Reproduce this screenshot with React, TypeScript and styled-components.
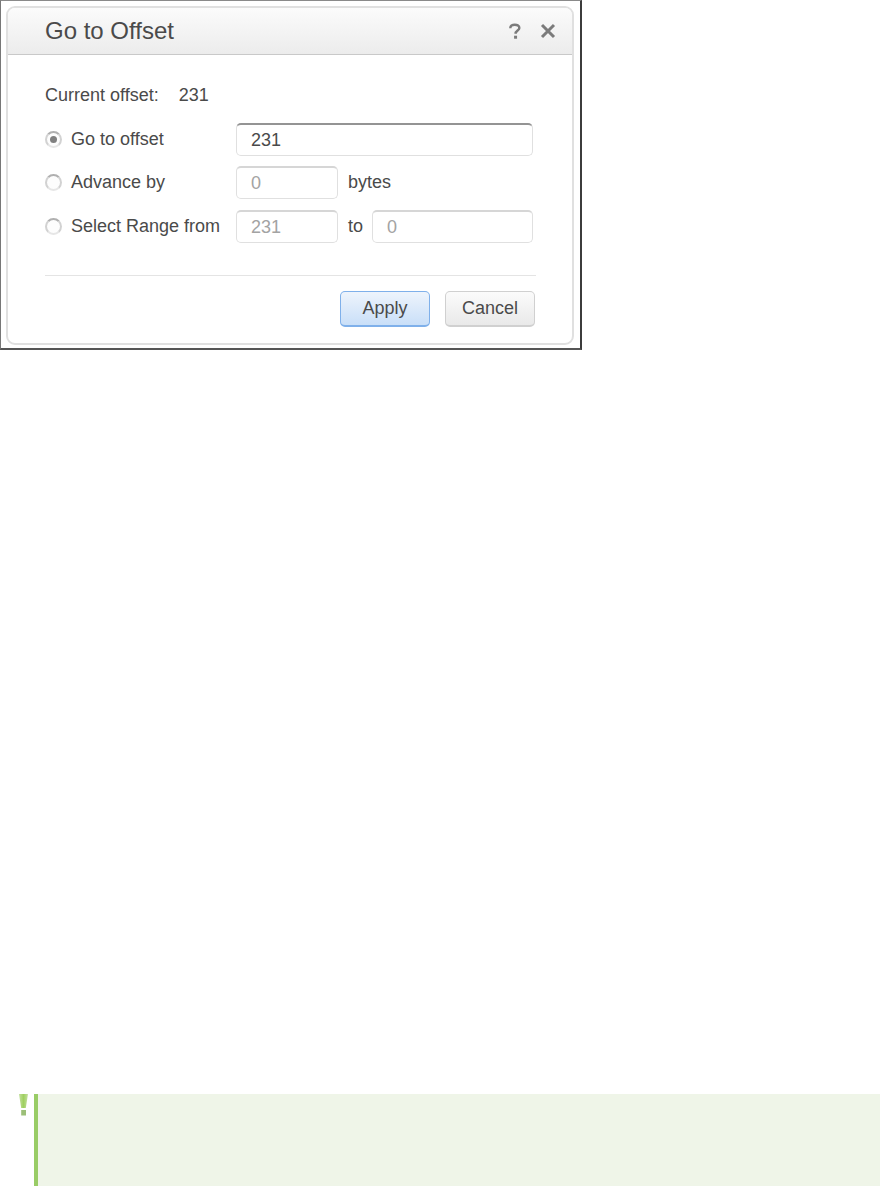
import React from "react";
import styled, { createGlobalStyle } from "styled-components";

const GlobalStyle = createGlobalStyle`
    html, body {
        margin: 0;
        padding: 0;
        background-color: #ffffff;
    }
    body {
        font-family: "Liberation Sans", Arial, sans-serif;
        color: #4a4a4a;
    }
`;

const Page = styled.div`
    display: flex;
    flex-direction: column;
    width: 880px;
    height: 1186px;
    overflow: hidden;
`;

const Frame = styled.div`
    box-sizing: border-box;
    width: 582px;
    height: 350px;
    padding: 5px 6px 3px 5px;
    border-top: 1px solid #8a8a8a;
    border-left: 1px solid #777777;
    border-right: 2px solid #3c3c3c;
    border-bottom: 2px solid #555555;
    background-color: #ffffff;
`;

const Dialog = styled.div`
    box-sizing: border-box;
    display: flex;
    flex-direction: column;
    height: 100%;
    border: 2px solid #e0e0e0;
    border-radius: 9px;
    overflow: hidden;
`;

const Header = styled.div`
    box-sizing: border-box;
    display: flex;
    flex: none;
    align-items: center;
    justify-content: space-between;
    height: 47px;
    padding: 0 16px 0 37px;
    border-bottom: 1px solid #c9c9c9;
    background: linear-gradient(#fbfbfb, #ececec);
`;

const Title = styled.div`
    color: #4a4a4a;
    font-size: 24px;
`;

const HeaderIcons = styled.div`
    display: flex;
    align-items: center;
    gap: 18px;
`;

const Icon = styled.svg`
    display: block;
`;

const Body = styled.div`
    display: flex;
    flex: 1;
    flex-direction: column;
    padding: 29px 36px 0 37px;
`;

const CurrentRow = styled.div`
    display: flex;
    align-items: center;
    gap: 20px;
    height: 22px;
    margin-bottom: 17px;
    font-size: 18px;
    white-space: nowrap;
`;

const Row = styled.div<{ $gap: number }>`
    display: flex;
    align-items: center;
    height: 33px;
    margin-bottom: ${(props) => props.$gap}px;
    font-size: 18px;
    white-space: nowrap;
`;

const RadioLabel = styled.label`
    display: flex;
    flex: none;
    align-items: center;
    gap: 9px;
    width: 191px;
`;

const Radio = styled.span<{ $checked?: boolean }>`
    box-sizing: border-box;
    display: flex;
    align-items: center;
    justify-content: center;
    width: 17px;
    height: 17px;
    border: 2px solid #d2d2d2;
    border-top-color: #b0b0b0;
    border-bottom-color: #e6e6e6;
    border-radius: 50%;
    background-color: #fdfdfd;
    &::after {
        content: "";
        display: ${(props) => (props.$checked ? "block" : "none")};
        width: 7px;
        height: 7px;
        border-radius: 50%;
        background-color: #808080;
    }
`;

const Field = styled.div<{ $width: number; $active?: boolean }>`
    box-sizing: border-box;
    display: flex;
    flex: none;
    align-items: center;
    width: ${(props) => props.$width}px;
    height: 33px;
    padding-left: 14px;
    border: 1px solid #e0e0e0;
    border-top: 2px solid ${(props) => (props.$active ? "#949494" : "#d6d6d6")};
    border-radius: 5px;
    color: ${(props) => (props.$active ? "#4a4a4a" : "#a3a3a3")};
`;

const Unit = styled.span<{ $gap: number }>`
    margin: 0 ${(props) => props.$gap}px 0 10px;
`;

const Divider = styled.div`
    height: 1px;
    margin-top: 21px;
    background-color: #e4e4e4;
`;

const Footer = styled.div`
    display: flex;
    justify-content: flex-end;
    gap: 15px;
    margin: 15px 1px 0 0;
`;

const Button = styled.button<{ $primary?: boolean }>`
    box-sizing: border-box;
    width: 90px;
    height: 36px;
    padding: 0;
    border: 1px solid ${(props) => (props.$primary ? "#7fb0ea" : "#d0d0d0")};
    border-bottom-width: 2px;
    border-radius: 5px;
    background: ${(props) =>
        props.$primary
            ? "linear-gradient(#eef4fc, #c9dff8)"
            : "linear-gradient(#fbfbfb, #e9e9e9)"};
    color: #4a4a4a;
    font-family: "Liberation Sans", Arial, sans-serif;
    font-size: 18px;
`;

const Note = styled.div`
    display: flex;
    flex: none;
    gap: 6px;
    height: 92px;
    margin-top: 744px;
    padding-left: 19px;
`;

const NoteBody = styled.div`
    flex: 1;
    border-left: 4px solid #99cc66;
    background-color: #eff5e8;
`;

const App = () => {
    return (
        <Page>
            <GlobalStyle />
            <Frame>
                <Dialog>
                    <Header>
                        <Title>Go to Offset</Title>
                        <HeaderIcons>
                            <Icon width="14" height="16" viewBox="0 0 14 17">
                                <path
                                    d="M2 5.5C2 3 4 1.8 6.8 1.8S11.6 3.2 11.6 5.2C11.6 8 7.6 8 7.6 11.4"
                                    fill="none"
                                    stroke="#7b7b7b"
                                    strokeWidth="2.6"
                                />
                                <rect x="6" y="13.5" width="3.2" height="3.2" fill="#7b7b7b" />
                            </Icon>
                            <Icon width="16" height="16" viewBox="0 0 16 16">
                                <path
                                    d="M2 2L14 14M14 2L2 14"
                                    fill="none"
                                    stroke="#7b7b7b"
                                    strokeWidth="3"
                                />
                            </Icon>
                        </HeaderIcons>
                    </Header>
                    <Body>
                        <CurrentRow>
                            <span>Current offset:</span>
                            <span>231</span>
                        </CurrentRow>
                        <Row $gap={10}>
                            <RadioLabel>
                                <Radio $checked />
                                Go to offset
                            </RadioLabel>
                            <Field $width={297} $active>
                                231
                            </Field>
                        </Row>
                        <Row $gap={11}>
                            <RadioLabel>
                                <Radio />
                                Advance by
                            </RadioLabel>
                            <Field $width={102}>0</Field>
                            <Unit $gap={0}>bytes</Unit>
                        </Row>
                        <Row $gap={11}>
                            <RadioLabel>
                                <Radio />
                                Select Range from
                            </RadioLabel>
                            <Field $width={102}>231</Field>
                            <Unit $gap={9}>to</Unit>
                            <Field $width={161}>0</Field>
                        </Row>
                        <Divider />
                        <Footer>
                            <Button $primary>Apply</Button>
                            <Button>Cancel</Button>
                        </Footer>
                    </Body>
                </Dialog>
            </Frame>
            <Note>
                <Icon width="9" height="22" viewBox="0 0 9 22">
                    <defs>
                        <linearGradient id="noteMark" x1="0" x2="1" y1="0" y2="0">
                            <stop offset="0" stopColor="#c4e09f" />
                            <stop offset="0.5" stopColor="#9fd060" />
                            <stop offset="1" stopColor="#c4e09f" />
                        </linearGradient>
                    </defs>
                    <path d="M0 0H9L6.8 14H2.2Z" fill="url(#noteMark)" />
                    <rect x="2.2" y="16" width="4.8" height="5.5" fill="#9cbf78" />
                </Icon>
                <NoteBody />
            </Note>
        </Page>
    );
};

export default App;
